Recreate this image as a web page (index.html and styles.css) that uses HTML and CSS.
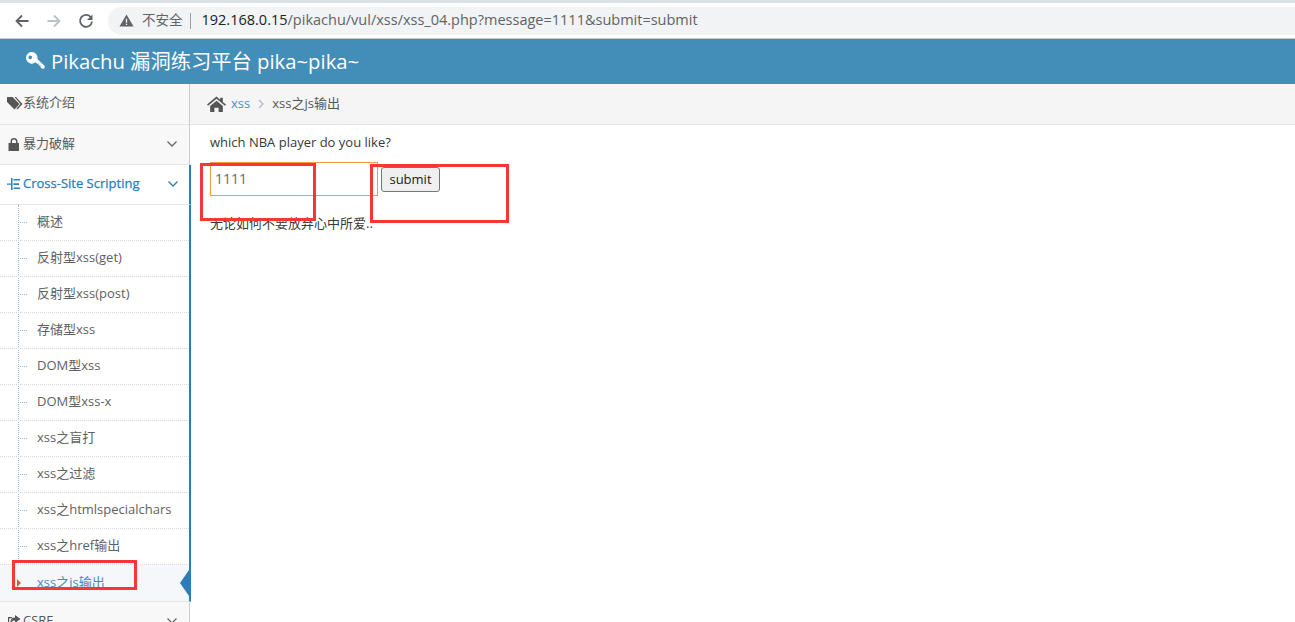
FILE: index.html
```html
<!DOCTYPE html>
<html lang="zh">
<head>
<meta charset="utf-8">
<title>xss之js输出</title>
<link rel="stylesheet" href="styles.css">
</head>
<body>
<header class="chrome">
  <svg class="nav-icon" viewBox="0 0 16 16"><path d="M14.500 8H2.500M8 2.500 2.500 8 8 13.500" fill="none" stroke="#5f6368" stroke-width="1.800"/></svg>
  <svg class="nav-icon" viewBox="0 0 16 16"><path d="M1.500 8h12M8 2.500 13.500 8 8 13.500" fill="none" stroke="#bcc0c4" stroke-width="1.800"/></svg>
  <svg class="nav-icon" viewBox="0 0 16 16"><path d="M13 4.500A6 6 0 1 0 14 8.500" fill="none" stroke="#5f6368" stroke-width="1.800"/><path d="M14.500 1.500v5.500h-5.500z" fill="#5f6368"/></svg>
  <div class="omnibox">
    <svg class="warn" viewBox="0 0 16 16"><path d="M8 1.500 15.500 14.500H.5z" fill="#5f6368"/><path d="M7.300 6h1.400v4.500H7.300zM7.300 11.500h1.400v1.400H7.300z" fill="#f1f3f4"/></svg>
    <span class="insecure">不安全</span>
    <span class="sep"></span>
    <span class="url"><b>192.168.0.15</b>/pikachu/vul/xss/xss_04.php?message=1111&amp;submit=submit</span>
  </div>
</header>
<div class="navbar">
  <svg class="key" viewBox="0 0 20 20"><path d="M6.500 1a5.500 5.500 0 1 0 3.500 9.700l1.500 1.500 1.500-.2.100 1.700 1.600.1.200 1.800 1.600 1.400 2-.3.300-2.300-7-6.700A5.500 5.500 0 0 0 6.500 1zM5 4.200a1.800 1.800 0 1 1 0 3.600 1.800 1.800 0 0 1 0-3.600z" fill="#fff" fill-rule="evenodd"/></svg>
  <span>Pikachu 漏洞练习平台 pika~pika~</span>
</div>
<div class="layout">
  <aside class="sidebar">
    <div class="top-item first">
      <svg class="ti tag" viewBox="0 0 16 14"><path d="M0 1h5.500l7 7-5 5.500-7.500-7.500z" fill="#555"/><path d="M7.500 1h1.500l6.500 7-5 5.500-1-1 4-4.500z" fill="#555"/></svg>
      <span>系统介绍</span>
    </div>
    <div class="top-item">
      <svg class="ti" viewBox="0 0 14 14"><path d="M3.500 6V4.500a3.500 3.500 0 0 1 7 0V6h1.500v8H1.500V6zM5 6h4V4.500a2 2 0 0 0-4 0z" fill="#555" fill-rule="evenodd"/></svg>
      <span>暴力破解</span>
      <svg class="chev" viewBox="0 0 12 8"><path d="M1.500 1.500 6 6l4.500-4.500" fill="none" stroke="#666" stroke-width="1.300"/></svg>
    </div>
    <div class="top-item open">
      <svg class="ti" viewBox="0 0 14 14"><path d="M0 6.500h4v1.300H0zM4 1h1.500v12H4zM6.500 2H13v1.600H6.500zM6.500 6.300H12v1.600H6.500zM6.500 10.500H13v1.600H6.500z" fill="#2b7dbc"/></svg>
      <span>Cross-Site Scripting</span>
      <svg class="chev" viewBox="0 0 12 8"><path d="M1.500 1.500 6 6l4.500-4.500" fill="none" stroke="#2b7dbc" stroke-width="1.300"/></svg>
    </div>
    <ul class="submenu">
      <li>概述</li>
      <li>反射型xss(get)</li>
      <li>反射型xss(post)</li>
      <li>存储型xss</li>
      <li>DOM型xss</li>
      <li>DOM型xss-x</li>
      <li>xss之盲打</li>
      <li>xss之过滤</li>
      <li>xss之htmlspecialchars</li>
      <li>xss之href输出</li>
      <li class="active">xss之js输出</li>
    </ul>
    <div class="top-item csrf">
      <svg class="ti" viewBox="0 0 14 14"><path d="M8 1l5.500 4L8 9V6.500C5 6.500 4 8 4 10 2.800 7 4 3.500 8 3.500zM1 3h4v1.300H2.300v7.400h7.400V9.500H11V13H1z" fill="#555"/></svg>
      <span>CSRF</span>
      <svg class="chev" viewBox="0 0 12 8"><path d="M1.500 1.500 6 6l4.500-4.500" fill="none" stroke="#666" stroke-width="1.300"/></svg>
    </div>
  </aside>
  <main class="main">
    <nav class="crumbs">
      <svg class="home" viewBox="0 0 18 15"><path d="M9 .5 0 8l1 1.200L9 2.600l8 6.600L18 8l-3-2.500V1.500h-2.500v1.900zM3 9.500 9 4.500l6 5V15h-4v-4H7v4H3z" fill="#555"/></svg>
      <a class="crumb-link">xss</a>
      <svg class="crumb-sep" viewBox="0 0 6 10"><path d="M1 1l4 4-4 4" fill="none" stroke="#b2b6bf" stroke-width="1.200"/></svg>
      <span>xss之js输出</span>
    </nav>
    <section class="content">
      <p class="question">which NBA player do you like?</p>
      <form class="form">
        <input class="field" type="text" value="1111">
        <button class="btn" type="button">submit</button>
      </form>
      <p class="answer">无论如何不要放弃心中所爱..</p>
    </section>
  </main>
</div>
<div class="mark mark-input"></div>
<div class="mark mark-btn"></div>
<div class="mark mark-menu"></div>
</body>
</html>
```
FILE: styles.css
```css
* { box-sizing: border-box; }
html, body { margin: 0; height: 622px; overflow: hidden; }
body {
  position: relative;
  background: #fff;
  color: #393939;
  font: 13px/1.5 "Open Sans", "Noto Sans CJK SC", sans-serif;
}
.chrome {
  height: 39px;
  border-top: 3px solid #dee1e6;
  border-bottom: 1px solid #c9cbce;
  display: flex;
  align-items: center;
  padding: 0 0 0 14px;
  background: #fff;
}
.nav-icon { width: 16px; height: 16px; margin-right: 16px; flex: none; }
.omnibox {
  margin-left: -2px;
  height: 28px;
  width: 1190px;
  flex: none;
  display: flex;
  align-items: center;
  background: #f1f3f4;
  border-radius: 14px 0 0 14px;
  padding-left: 11px;
}
.warn { width: 15px; height: 15px; margin-right: 8px; }
.insecure { font-size: 13.500px; color: #5f6368; }
.sep { width: 1px; height: 16px; background: #9aa0a6; margin: 0 11px 0 7px; }
.url { font-size: 14.500px; color: #5f6368; font-family: "Open Sans", sans-serif; white-space: nowrap; position: relative; top: -1px; }
.url b { font-weight: 400; color: #202124; }
.navbar {
  height: 45px;
  background: #438eb9;
  color: #fff;
  font-size: 20.300px;
  display: flex;
  align-items: center;
  padding-left: 25px;
  gap: 5px;
}
.key { width: 21px; height: 21px; flex: none; }
.layout { display: flex; height: 538px; }
.sidebar {
  width: 190px;
  flex: none;
  border-right: 1px solid #ccc;
  background: #f8f8f8;
  position: relative;
}
.top-item {
  height: 40px;
  display: flex;
  align-items: center;
  padding: 0 0 2px 7px;
  color: #585858;
  border-bottom: 1px solid #e5e5e5;
  background: #f8f8f8;
}
.first { height: 41px; }
.ti { width: 14px; height: 14px; flex: none; margin-right: 2px; }
.tag { width: 16px; margin-right: 0; }
.chev { width: 12px; height: 8px; margin-left: auto; margin-right: 11px; flex: none; }
.top-item.open { background: #fff; color: #2b7dbc; border-right: 2px solid #2b7dbc; margin-right: -2px; }
.open .chev { margin-right: 10px; }
.open span { -webkit-text-stroke: .25px #2b7dbc; }
.submenu {
  list-style: none;
  margin: 0 -2px 0 0;
  padding: 0;
  background: #fff;
  position: relative;
  border-right: 2px solid #2b7dbc;
  border-bottom: 1px solid #e5e5e5;
}
.submenu::before {
  content: "";
  position: absolute;
  left: 18px;
  top: 0;
  bottom: 0;
  border-left: 1px dotted #9dbdd6;
}
.submenu li {
  height: 36px;
  padding: 0 0 2px 37px;
  display: flex;
  align-items: center;
  color: #616161;
  border-bottom: 1px dotted #d9d9d9;
  position: relative;
  white-space: nowrap;
}
.submenu li::before {
  content: "";
  position: absolute;
  left: 20px;
  top: 17px;
  width: 7px;
  border-top: 1px dotted #9dbdd6;
}
.submenu li.active { color: #4b88b7; background: #f5f7fa; border-bottom: 0; padding-bottom: 1px; }
.submenu li.active::before {
  left: 17px;
  top: 14px;
  width: 0;
  border: 0;
  border-left: 4px solid #c86139;
  border-top: 4px solid transparent;
  border-bottom: 4px solid transparent;
}
.submenu li.active::after {
  content: "";
  position: absolute;
  right: 0;
  top: 5px;
  border-right: 9px solid #2b7dbc;
  border-top: 13px solid transparent;
  border-bottom: 13px solid transparent;
}
.main { flex: 1; min-width: 0; }
.crumbs {
  height: 41px;
  display: flex;
  align-items: center;
  padding-left: 17px;
  background: #f5f5f5;
  border-bottom: 1px solid #e5e5e5;
  color: #555;
}
.home { width: 19px; height: 16px; margin-right: 5px; flex: none; }
.crumb-link { color: #4c8fbd; }
.crumb-sep { width: 6px; height: 10px; margin: 0 8px 0 8px; flex: none; }
.content { padding: 0 20px; }
.question { margin: 8px 0 0; line-height: 19px; }
.form { display: flex; align-items: flex-start; margin-top: 10px; }
.field {
  width: 168px;
  height: 34px;
  border: 1px solid #f59942;
  padding: 0 4px 2px;
  font: 14px "Open Sans", sans-serif;
  color: #696969;
  outline: 0;
  background: #fff;
}
.btn {
  margin: 5px 0 0 3px;
  width: 59px;
  height: 25px;
  padding: 0 0 2px;
  font: 13px "Open Sans", sans-serif;
  color: #222;
  background: #efefef;
  border: 1px solid #767676;
  border-radius: 3px;
}
.answer { margin: 18px 0 0; line-height: 19px; }
.mark {
  position: absolute;
  border: 3px solid #f73636;
}
.mark-input { left: 200px; top: 163px; width: 116px; height: 58px; }
.mark-btn { left: 370px; top: 164px; width: 139px; height: 59px; }
.mark-menu { left: 12px; top: 560px; width: 125px; height: 30px; }
```
